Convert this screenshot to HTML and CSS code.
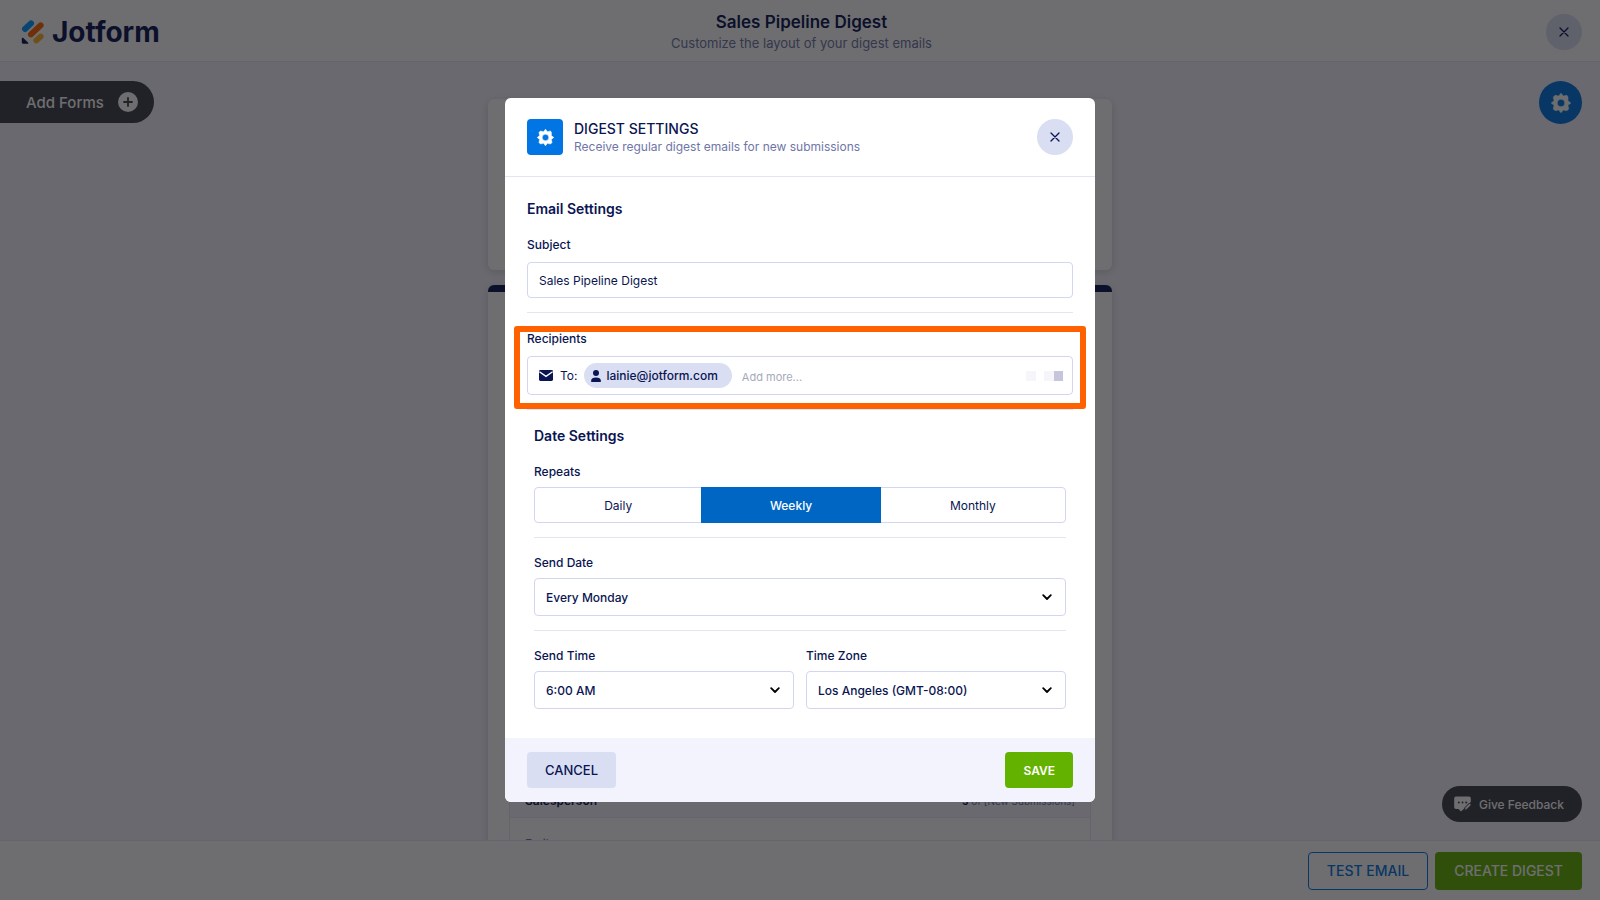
FILE: index.html
```html
<!DOCTYPE html>
<html lang="en">
<head>
<meta charset="utf-8">
<title>Sales Pipeline Digest</title>
<link rel="stylesheet" href="styles.css">
</head>
<body>
<svg class="defs" aria-hidden="true">
  <symbol id="gear" viewBox="0 0 20 20">
    <path fill-rule="evenodd" d="M10 0.2 12.3 3.1 15.9 2.3 17 4.1 16.9 7.7 19.8 10 16.9 12.3 17.7 15.9 15.9 17.7 12.3 16.9 10 19.8 7.7 16.9 4.1 17.7 2.3 15.9 3.1 12.3 0.2 10 3.1 7.7 2.3 4.1 4.1 2.3 7.7 3.1ZM10 6.2a3.8 3.8 0 1 0 0 7.6a3.8 3.8 0 0 0 0-7.6Z" fill="currentColor" stroke="currentColor" stroke-width=".6" stroke-linejoin="round"/>
  </symbol>
  <symbol id="cross" viewBox="0 0 10 10">
    <path d="M1 1 9 9M9 1 1 9" fill="none" stroke="currentColor" stroke-width="1.3" stroke-linecap="round"/>
  </symbol>
</svg>

<div class="page">
  <header class="topbar">
    <a class="logo" href="#">
      <svg width="24" height="24" viewBox="0 0 24 24" aria-hidden="true">
        <g fill="none" stroke-linecap="round" stroke-width="6">
          <path d="M4 9 10 3.4" stroke="#0099ff"/>
          <path d="M10 14.4 19.6 5.4" stroke="#ff6100"/>
          <path d="M15.4 20.4 19.6 16.6" stroke="#ffb629"/>
        </g>
        <path d="M.8 18.6c0-.9.9-1.2 1.500-.6L7 22.400c.6.6.3 1.400-.5 1.400H2c-.7 0-1.200-.5-1.200-1.200Z" fill="#0a1551"/>
      </svg>
      <span>Jotform</span>
    </a>
    <div class="heading">
      <h1>Sales Pipeline Digest</h1>
      <p>Customize the layout of your digest emails</p>
    </div>
    <div class="topbar-end">
      <button class="round" aria-label="Close builder"><svg width="10" height="10"><use href="#cross"/></svg></button>
    </div>
  </header>

  <main class="canvas">
    <div class="side">
      <button class="add-forms">Add Forms
        <svg width="20" height="20" viewBox="0 0 20 20" aria-hidden="true"><circle cx="10" cy="10" r="10" fill="#fff"/><path d="M10 6v8M6 10h8" stroke="#3f424a" stroke-width="1.8" stroke-linecap="round"/></svg>
      </button>
    </div>
    <div class="mail">
      <section class="card intro"></section>
      <section class="card report">
        <table>
          <tr><th>Salesperson</th><td><b>5</b> of [New Submissions]</td></tr>
          <tr><td colspan="2">Emily</td></tr>
        </table>
      </section>
    </div>
    <div class="side side-end">
      <button class="gear-button" aria-label="Digest settings"><svg width="20" height="20"><use href="#gear"/></svg></button>
      <button class="feedback">
        <svg width="18" height="16" viewBox="0 0 18 16" aria-hidden="true">
          <path d="M2 .4h13A1.8 1.8 0 0 1 16.800 2.200V6L10 12.800 7 15.600 4.500 13H2A1.800 1.800 0 0 1 .2 11.200V2.200A1.800 1.800 0 0 1 2 .4Z" fill="#fff"/>
          <path d="M10.500 14.500 11 11.500 15.500 7 17.400 8.900 12.900 13.500Z" fill="#fff" stroke="#3f424a" stroke-width="1"/>
          <g fill="#3f424a"><circle cx="4.800" cy="6.500" r="1"/><circle cx="8.500" cy="6.500" r="1"/><circle cx="12.200" cy="6.500" r="1"/></g>
        </svg>
        Give Feedback
      </button>
    </div>
  </main>

  <footer class="bottombar">
    <button class="outline">TEST EMAIL</button>
    <button class="create">CREATE DIGEST</button>
  </footer>
</div>

<div class="overlay">
  <form class="modal" role="dialog" aria-labelledby="modal-title">
    <header class="modal-head">
      <span class="badge"><svg width="17" height="17"><use href="#gear"/></svg></span>
      <div class="modal-title">
        <h2 id="modal-title">DIGEST SETTINGS</h2>
        <p>Receive regular digest emails for new submissions</p>
      </div>
      <button type="button" class="round" aria-label="Close"><svg width="10" height="10"><use href="#cross"/></svg></button>
    </header>

    <div class="modal-body">
      <section class="group">
        <h3>Email Settings</h3>
        <div class="field wide">
          <label for="subject">Subject</label>
          <input id="subject" class="box text" type="text" value="Sales Pipeline Digest">
        </div>
        <div class="field wide highlighted">
          <label for="more">Recipients</label>
          <div class="box recipients">
            <svg width="14" height="11" viewBox="0 0 14 11" aria-hidden="true"><rect width="14" height="11" rx="1.400" fill="#0a1551"/><path d="M.4 1.800 7 6.400 13.600 1.800" fill="none" stroke="#fff" stroke-width="1.400"/></svg>
            <span class="to">To:</span>
            <span class="chip">
              <svg width="10" height="12" viewBox="0 0 10 12" aria-hidden="true"><circle cx="5" cy="3" r="3" fill="#0a1551"/><path d="M.2 12V10.500C.2 8.600 2 7.600 5 7.600s4.800 1 4.800 2.900V12Z" fill="#0a1551"/></svg>
              lainie@jotform.com
            </span>
            <input id="more" type="text" placeholder="Add more...">
            <svg width="38" height="10" viewBox="0 0 38 10" aria-hidden="true"><path d="M0 0h10v10H0ZM18 0h10v10H18Z" fill="#f5f6f9"/><path d="M28 0h9v10h-9Z" fill="#c6c5db"/></svg>
          </div>
        </div>
      </section>

      <section class="group dates">
        <h3>Date Settings</h3>
        <fieldset class="field">
          <legend>Repeats</legend>
          <div class="segments">
            <label><input type="radio" name="repeat">Daily</label>
            <label><input type="radio" name="repeat" checked>Weekly</label>
            <label><input type="radio" name="repeat">Monthly</label>
          </div>
        </fieldset>
        <div class="field">
          <label for="date">Send Date</label>
          <div class="select"><select id="date" class="box"><option>Every Monday</option></select><svg width="10" height="7" viewBox="0 0 10 7" aria-hidden="true"><path d="M1.200 1.200 5 5 8.800 1.200"/></svg></div>
        </div>
        <div class="pair">
          <div class="field">
            <label for="time">Send Time</label>
            <div class="select"><select id="time" class="box"><option>6:00 AM</option></select><svg width="10" height="7" viewBox="0 0 10 7" aria-hidden="true"><path d="M1.200 1.200 5 5 8.800 1.200"/></svg></div>
          </div>
          <div class="field">
            <label for="zone">Time Zone</label>
            <div class="select"><select id="zone" class="box"><option>Los Angeles (GMT-08:00)</option></select><svg width="10" height="7" viewBox="0 0 10 7" aria-hidden="true"><path d="M1.200 1.200 5 5 8.800 1.200"/></svg></div>
          </div>
        </div>
      </section>
    </div>

    <footer class="modal-foot">
      <button type="button" class="cancel">CANCEL</button>
      <button type="submit" class="save">SAVE</button>
    </footer>
  </form>
</div>
</body>
</html>
```
FILE: styles.css
```css
* { box-sizing: border-box; }
body {
  margin: 0;
  font-family: Inter, "Liberation Sans", sans-serif;
  font-size: 12px;
  color: #0a1551;
}
h1, h2, h3, p, fieldset, legend { margin: 0; padding: 0; border: 0; }
button, input, select { font: inherit; color: inherit; margin: 0; }
button { border: 0; padding: 0; border-radius: 4px; font-weight: 500; cursor: pointer; }
svg { flex: none; }
.defs { position: absolute; width: 0; height: 0; }

/* Page behind the dialog */
.page { display: flex; flex-direction: column; height: 100vh; overflow: hidden; background: #f3f3fc; }
.topbar {
  display: grid;
  grid-template-columns: 1fr auto 1fr;
  align-items: center;
  height: 62px;
  padding: 3px 18px 0 21px;
  background: #fff;
  border-bottom: 1px solid #e3e5f5;
}
.logo { display: flex; align-items: center; gap: 7px; color: #0a1551; text-decoration: none; font-size: 28px; line-height: 32px; font-weight: 700; }
.heading { text-align: center; }
.heading h1 { font-size: 17px; line-height: 22px; font-weight: 600; }
.heading p { font-size: 13px; line-height: 20px; color: #6f76a7; }
.topbar-end { display: flex; justify-content: flex-end; }
.round { display: grid; place-items: center; width: 36px; height: 36px; border-radius: 50%; background: #dadef3; color: #0a1551; }

.canvas { flex: 1; min-height: 0; display: grid; grid-template: minmax(0, 1fr) / 1fr 624px 1fr; overflow: hidden; }
.side { display: flex; flex-direction: column; align-items: flex-start; justify-content: space-between; padding: 19px 0 18px; }
.side-end { align-items: flex-end; padding-right: 18px; }
.add-forms { display: flex; align-items: center; gap: 14px; height: 42px; padding: 0 16px 0 26px; border-radius: 0 22px 22px 0; background: #3f424a; color: #fff; font-size: 15px; }
.gear-button { display: grid; place-items: center; width: 43px; height: 43px; border-radius: 50%; background: #0075e3; color: #fff; }
.feedback { display: flex; align-items: center; gap: 7px; height: 36px; padding: 0 18px 0 12px; border-radius: 18px; background: #3f424a; color: #fff; }

.mail { display: flex; flex-direction: column; gap: 15px; padding-top: 37px; }
.card { flex: none; background: #fff; border-radius: 6px; box-shadow: 0 2px 8px rgba(10, 21, 81, .16); }
.intro { height: 171px; }
.report { border-top: 7px solid #0a1551; padding: 491px 21px 21px; }
.report table { width: 100%; border-collapse: collapse; border: 1px solid #e3e5f5; }
.report th { text-align: left; font-weight: 600; }
.report tr:first-child { background: #f3f3fc; border-bottom: 1px solid #e3e5f5; }
.report td, .report th { height: 34px; padding: 0 15px; }
.report tr:first-child td { text-align: right; font-size: 10px; color: #6f76a7; }
.report tr:last-child td { height: 52px; color: #6f76a7; }
.report b { color: #0a1551; }

.bottombar { display: flex; justify-content: flex-end; align-items: center; gap: 7px; height: 60px; padding: 0 18px; background: #fff; border-top: 1px solid #e3e5f5; }
.bottombar button { height: 38px; padding: 0 18px; font-size: 14px; }
.bottombar .outline { background: #fff; border: 1px solid #0075e3; color: #0075e3; }
.bottombar .create { padding: 0 19px; background: #64b200; color: #fff; }

/* Dialog */
.overlay { position: fixed; inset: 0; display: flex; align-items: center; justify-content: center; background: rgba(13, 14, 17, .6); }
.modal { width: 590px; max-width: 100%; border-radius: 6px; background: #fff; overflow: hidden; }
.modal-head { display: flex; align-items: center; gap: 11px; padding: 21px 22px; border-bottom: 1px solid #e3e5f5; }
.badge { display: grid; place-items: center; width: 36px; height: 36px; border-radius: 4px; background: #0075e3; color: #fff; }
.modal-title { flex: 1; }
.modal-title h2 { font-size: 14px; line-height: 20px; font-weight: 500; }
.modal-title p { line-height: 16px; color: #6f76a7; }
.modal-body { padding: 22px 22px 29px; }

.group h3 { font-size: 14px; line-height: 20px; font-weight: 600; margin-bottom: 18px; }
.dates { padding: 16px 7px 0; }
.field { display: flex; flex-direction: column; gap: 7px; }
.wide { gap: 9px; }
.field > label, .field legend { font-weight: 500; line-height: 16px; }
.field legend { margin-bottom: 7px; }
.field + .field, .field + .pair { margin-top: 17px; }
.field + .highlighted { margin-top: 18px; }
.wide, .dates > .field { padding-bottom: 14px; border-bottom: 1px solid #e3e5f5; }
.box { width: 100%; border: 1px solid #d2d6ef; border-radius: 4px; background: #fff; }
.text { height: 36px; padding: 0 11px; }

.highlighted { position: relative; }
.highlighted::after { content: ""; position: absolute; inset: -5px -13px 0; border: 6px solid #ff6100; border-radius: 3px; pointer-events: none; }
.recipients { display: flex; align-items: center; height: 39px; padding: 0 8px 0 11px; }
.to { margin: 0 7px; }
.chip { display: flex; align-items: center; gap: 5px; height: 25px; padding: 0 14px 0 7px; border-radius: 13px; background: #dadef3; font-weight: 500; }
.recipients input { flex: 1; min-width: 0; border: 0; padding: 3px 10px 0; font-size: 11px; outline: 0; background: none; }
.recipients input::placeholder { color: #a5aabb; opacity: 1; }

.segments { display: grid; grid-template-columns: 167fr 180fr 185fr; height: 36px; border: 1px solid #d2d6ef; border-radius: 4px; }
.segments label { display: grid; place-items: center; margin: -1px 0; }
.segments label:has(:checked) { background: #0066c3; color: #fff; font-weight: 500; }
.segments input { position: absolute; opacity: 0; pointer-events: none; }

.select { display: grid; align-items: center; }
.select > * { grid-area: 1 / 1; }
.select select { height: 38px; padding: 0 11px; font-weight: 500; appearance: none; }
.select svg { justify-self: end; margin-right: 14px; fill: none; stroke: #000; stroke-width: 1.8; stroke-linecap: round; stroke-linejoin: round; pointer-events: none; }
.pair { display: grid; grid-template-columns: 1fr 1fr; gap: 12px; }
.pair .field { margin-top: 0; }

.modal-foot { display: flex; justify-content: space-between; padding: 14px 22px; background: #f3f3fe; }
.modal-foot button { height: 36px; padding: 0 18px; font-size: 13px; }
.cancel { background: #dadef3; color: #0a1551; }
.modal-foot .save { background: #64b200; color: #fff; font-size: 12px; font-weight: 600; }
```
